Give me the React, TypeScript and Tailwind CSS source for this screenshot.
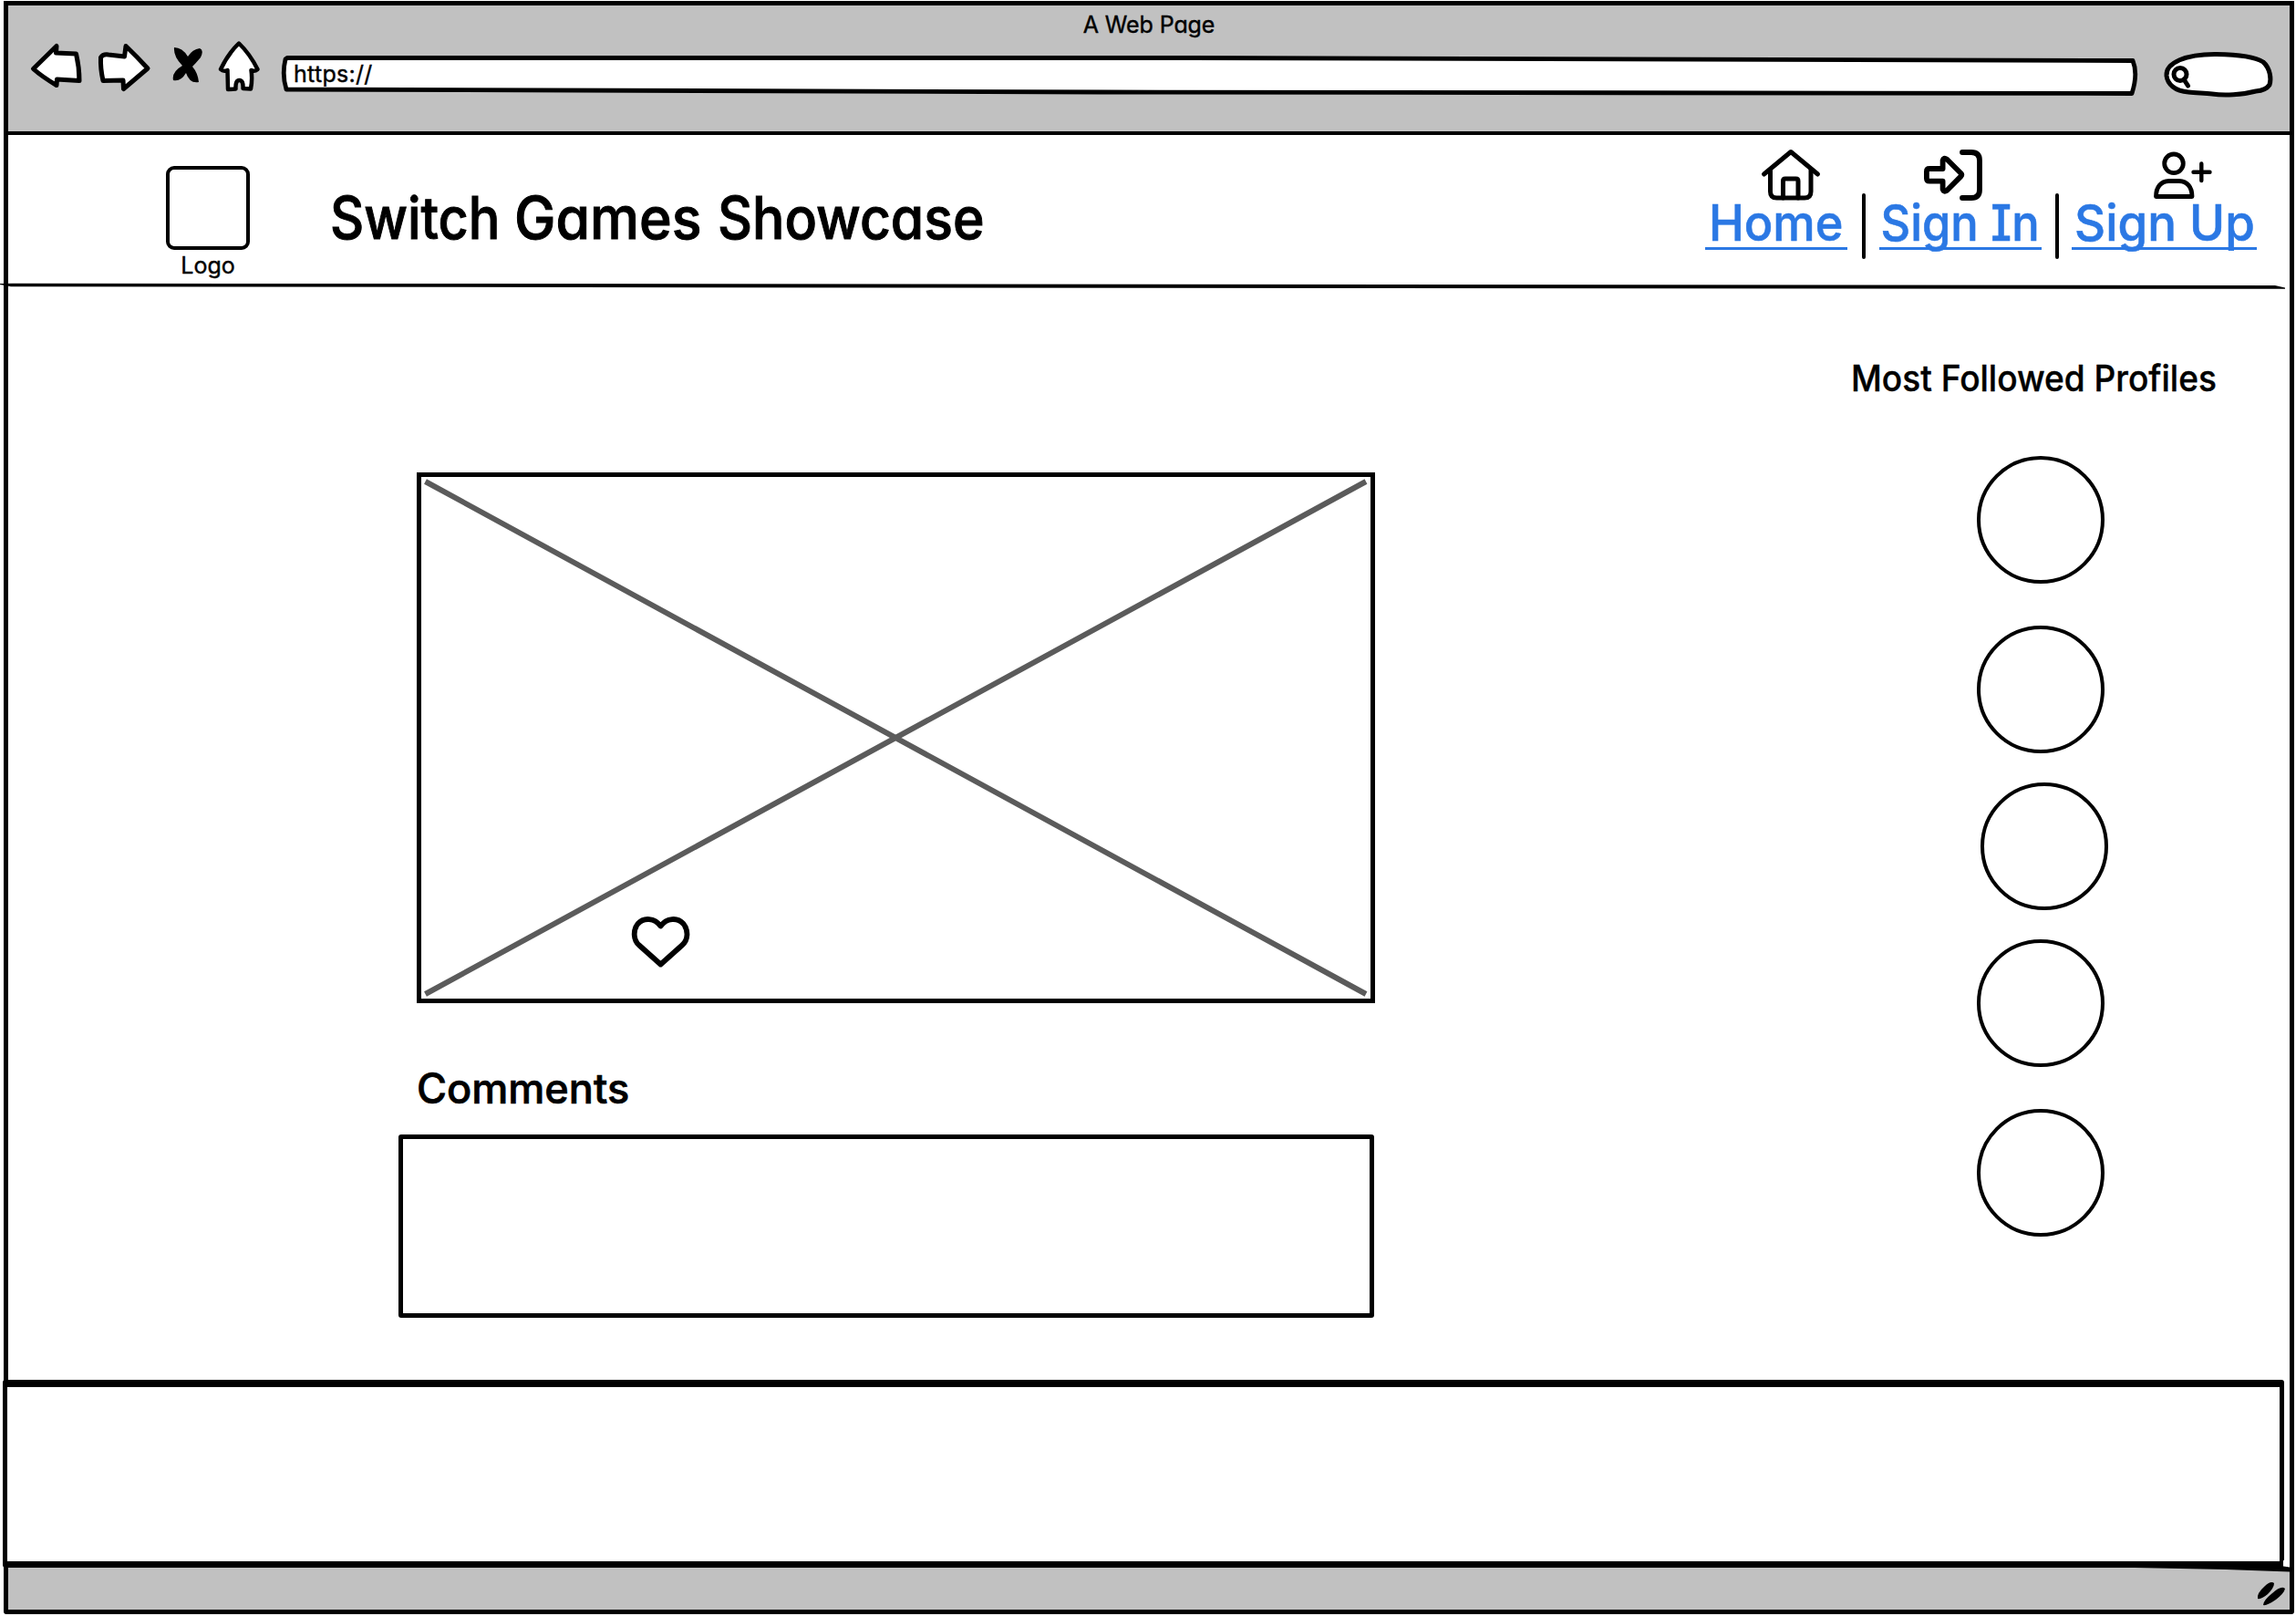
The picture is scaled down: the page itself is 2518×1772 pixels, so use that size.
import type { ReactNode } from "react";

const stroke = {
  fill: "none",
  stroke: "#000",
  strokeLinecap: "round" as const,
  strokeLinejoin: "round" as const,
};

function BackIcon() {
  return (
    <svg className="h-[56px] w-[58px] shrink-0" viewBox="0 0 58 56" {...stroke} fill="#fff" strokeWidth={5}>
      <path d="M30 5.5 L29.5 13 L51.500 14 Q55 29 55 43.500 L30.500 42 L30 48.500 Q14 39 4.500 30.500 Z" />
    </svg>
  );
}

function ForwardIcon() {
  return (
    <svg className="h-[58px] w-[60px] shrink-0" viewBox="0 0 60 58" {...stroke} fill="#fff" strokeWidth={5}>
      <path d="M31 5.500 Q43 17 55 30 L28.500 52.500 L28 43 L6 43.500 Q3 30 3.500 18 Q6 14 12 15 L29.500 17 Z" />
    </svg>
  );
}

function StopIcon() {
  return (
    <svg className="h-[44px] w-[36px] shrink-0" viewBox="0 0 36 44">
      <path d="M4 4 Q13 4 19 14 Q24 6 32 5 Q37 7 33 15 Q28 21 24 25 Q30 32 31 42 Q21 44 17 32 Q11 42 3 40 Q1 31 13 24 Q3 14 4 4 Z" />
    </svg>
  );
}

function BrowserHomeIcon() {
  return (
    <svg className="h-[60px] w-[50px] shrink-0" viewBox="0 0 50 60" {...stroke} fill="#fff" strokeWidth={4.5}>
      <path d="M25 6.500 Q13 18 5 35 Q8 38 12.500 36 L13 57 L21.500 56.500 Q21 47 25.500 47 Q30 47 29.500 56 L38 56.500 Q40 46 38.500 36 Q42 38 45.500 35 Q37 18 25 6.500 Z" />
    </svg>
  );
}

function HouseIcon() {
  return (
    <svg className="h-[64px] w-[68px]" viewBox="0 0 68 64" {...stroke} strokeWidth={5}>
      <path d="M4.500 31 L34 6.500 L63.500 31" />
      <path d="M11.500 26 V50 Q11.500 57 18.500 57 H49 Q56 57 56 50 V26" />
      <path d="M25.500 57 V38.500 Q25.500 36 28 36 H39.500 Q42 36 42 38.500 V57" />
    </svg>
  );
}

function SignInIcon() {
  return (
    <svg className="h-[64px] w-[70px]" viewBox="0 0 70 64" {...stroke} strokeWidth={5.8}>
      <path d="M9 25 H23.600 V16 Q24.500 12 28 14.500 L43.500 30 Q45 31.700 43.500 33.400 L28 49 Q24.500 51 23.600 47.500 V38.700 H9 Q5.900 38.700 5.900 35.500 V28 Q5.900 25 9 25 Z" />
      <path d="M45 7 H55 Q64 7 64 16 V48 Q64 57 55 57 H45" />
    </svg>
  );
}

function SignUpIcon() {
  return (
    <svg className="h-[64px] w-[70px]" viewBox="0 0 70 64" {...stroke} strokeWidth={4.8}>
      <circle cx="24" cy="19.300" r="10.300" />
      <path d="M4.500 55.500 C4.500 45 10 38.700 18.500 38.500 H30 C38.500 38.700 44 45 44 55.500 Z" />
      <path d="M54.300 19.500 V38 M45.500 28.700 H63.500" strokeWidth={4.4} />
    </svg>
  );
}

function NavLink({ icon, className, iconClass, textClass, children }: { icon: ReactNode; className: string; iconClass: string; textClass: string; children: ReactNode }) {
  return (
    <a href="#" className={`flex flex-col ${className}`}>
      <span className={iconClass}>{icon}</span>
      <span className="flex h-[50px] justify-center border-b-[3px] border-[#2b78e4] text-[55px] leading-[40px] whitespace-nowrap text-[#2b78e4] [-webkit-text-stroke:0.6px_#2b78e4]">
        <span className={`inline-block ${textClass}`}>{children}</span>
      </span>
    </a>
  );
}

function BrowserBar() {
  return (
    <div className="h-[142px] border-b-[4.5px] border-black bg-[#c1c1c1]">
      <p className="h-[40px] pt-[5px] text-center text-[25px] leading-[33px] tracking-[-0.1px] [-webkit-text-stroke:0.4px_#000]">A Web Page</p>
      <div className="flex items-start">
        <div className="ml-[23px] flex items-start">
          <div className="-mt-px"><BackIcon /></div>
          <div className="-mt-px ml-[17px]"><ForwardIcon /></div>
          <div className="ml-[20px] pt-[2px]"><StopIcon /></div>
          <div className="ml-[14px] -mt-[5px]"><BrowserHomeIcon /></div>
        </div>
        <div className="relative ml-[20px] mt-[10px] flex h-[60px] w-[2042px] shrink-0 items-center">
          <svg className="absolute inset-0" width="2042" height="60" viewBox="0 0 2042 60" {...stroke} fill="#fff" strokeWidth={4.8}>
            <path d="M8 7.500 L1000 7.500 L2032 10.500 Q2038 25 2031 46.500 L900 45 L7 42 Q2 26 6 9 Z" />
          </svg>
          <span className="relative -mt-[10px] pl-[15px] text-[25px] leading-[30px] tracking-[0.3px] [-webkit-text-stroke:0.4px_#000]">https://</span>
        </div>
        <svg className="ml-[20px] mt-[6px] h-[56px] w-[128px] shrink-0" viewBox="0 0 128 56" {...stroke} strokeWidth={5}>
          <path fill="#fff" d="M7 31 C6 17 28 7 62 7.500 C90 8 105 11 113 16 C121 23 122 35 120 41 Q116 47 105 48 C90 52 70 53 57 51 C48 50 40 50 31 49 C16 48 8 40 7 31 Z" />
          <circle cx="22" cy="29.500" r="7" />
          <path d="M26 35 L30.500 42" />
        </svg>
      </div>
    </div>
  );
}

function Divider({ className }: { className: string }) {
  return <div className={`mt-[52px] h-[72px] w-[4px] rounded-full bg-black ${className}`} />;
}

function Header() {
  return (
    <header className="relative flex h-[167px] items-start">
      <div className="ml-[173px] mt-[34px] flex w-[92px] flex-col items-center">
        <div className="h-[92px] w-[92px] rounded-[9px] border-4 border-black" />
        <span className="mt-px text-[25px] leading-[32px] [-webkit-text-stroke:0.4px_#000]">Logo</span>
      </div>
      <h1 className="ml-[88px] mt-[52px] flex text-[64px] leading-[77px] font-medium whitespace-nowrap [-webkit-text-stroke:1px_#000]">
        <span className="w-[202px]"><span className="inline-block origin-left scale-x-[0.9]">Switch&nbsp;</span></span>
        <span className="w-[223px]"><span className="inline-block origin-left scale-x-[0.95]">Games&nbsp;</span></span>
        <span><span className="inline-block origin-left scale-x-[0.92]">Showcase</span></span>
      </h1>
      <nav className="ml-auto mr-[36px] mt-[12px] flex items-start font-medium">
        <NavLink className="w-[156px]" iconClass="ml-[60px]" textClass="scale-x-[0.95]" icon={<HouseIcon />}>Home</NavLink>
        <Divider className="ml-[16px] mr-[15px]" />
        <NavLink className="w-[178px]" iconClass="ml-[46px]" textClass="scale-x-[0.92]" icon={<SignInIcon />}>Sign In</NavLink>
        <Divider className="ml-[15px] mr-[14px]" />
        <NavLink className="w-[203px]" iconClass="ml-[88px]" textClass="scale-x-[0.96]" icon={<SignUpIcon />}>Sign Up</NavLink>
      </nav>
      <svg className="absolute -left-[9px] top-[160px]" width="2510" height="10" viewBox="0 0 2510 10">
        <path d="M0 3 L14 2.700 L1000 3.500 L2495 5 L2506 7.500 L2506 8.800 L1500 8 L1000 7.500 L12 6.200 L0 4 Z" />
      </svg>
    </header>
  );
}

function Main() {
  return (
    <main className="flex h-[1198px] items-start justify-between">
      <section className="ml-[428px] mt-[203px] w-[1071px]">
        <div className="relative ml-[20px] h-[582px] w-[1051px] border-[5px] border-black">
          <svg className="block" width="1041" height="571" viewBox="0 0 1041 571" stroke="#5b5b5b" strokeWidth={6}>
            <path d="M4.500 5 L1036 567 M4.500 567 L1036 5" />
          </svg>
          <svg className="absolute left-[228px] top-[479px]" width="70" height="60" viewBox="0 0 70 60" {...stroke} strokeWidth={5.8}>
            <path d="M34.500 13.500 C28 4.500 16 3.500 9.500 11 C4 18 4.500 29 11 34.500 L34.500 55.500 L58 34.500 C65 28.500 65 18 59.500 11 C53 3.500 41 4.500 34.500 13.500 Z" />
          </svg>
        </div>
        <h2 className="ml-[20px] mt-[63px] h-[81px] origin-left scale-x-[0.98] text-[46px] leading-[60px] font-medium [-webkit-text-stroke:0.7px_#000]">Comments</h2>
        <div className="h-[201px] w-[1070px] rounded-[3px] border-[5px] border-black" />
      </section>
      <aside className="mr-[81px] mt-[70px] flex w-[400px] flex-col">
        <h2 className="h-[115px] origin-left scale-x-[0.95] text-[39px] leading-[60px] font-medium whitespace-nowrap [-webkit-text-stroke:0.4px_#000]">Most Followed Profiles</h2>
        <div className="ml-[138px] flex flex-col">
          <div className="size-[140px] rounded-full border-4 border-black" />
          <div className="mt-[46px] size-[140px] rounded-full border-4 border-black" />
          <div className="mt-[32px] ml-[4px] size-[140px] rounded-full border-4 border-black" />
          <div className="mt-[32px] size-[140px] rounded-full border-4 border-black" />
          <div className="mt-[46px] size-[140px] rounded-full border-4 border-black" />
        </div>
      </aside>
    </main>
  );
}

export default function App() {
  return (
    <div className="h-[1772px] w-[2518px] overflow-hidden bg-white pt-px pl-[4px] font-['Inter',sans-serif] text-black [font-feature-settings:'cv11','cv08']">
      <div className="flex h-[1769px] w-[2512px] flex-col rounded-b-[3px] border-[5px] border-black">
        <BrowserBar />
        <Header />
        <Main />
        <footer className="relative -ml-[6px] h-[206px] w-[2502px] shrink-0 rounded-[3px] border-x-[5px] border-t-8 border-b-[7px] border-black bg-white" />
        <div className="relative flex-1 bg-[#c1c1c1]">
          <svg className="absolute right-0 -top-[8px]" width="320" height="54" viewBox="0 0 320 54">
            <path fill="#fff" d="M313 0 H320 V9 L313 7 Z" />
            <path d="M0 5 L310 6 L320 7.500 V12.500 L250 10 L150 8 L0 7.500 Z" />
            <path d="M285 42 Q284 36 292 29 Q299 22 303 25 Q303 30 296 37 Q289 43 285 42 Z" />
            <path d="M291 49 Q291 44 301 36 Q311 27 315 31 Q314 36 305 43 Q295 50 291 49 Z" />
          </svg>
        </div>
      </div>
    </div>
  );
}
